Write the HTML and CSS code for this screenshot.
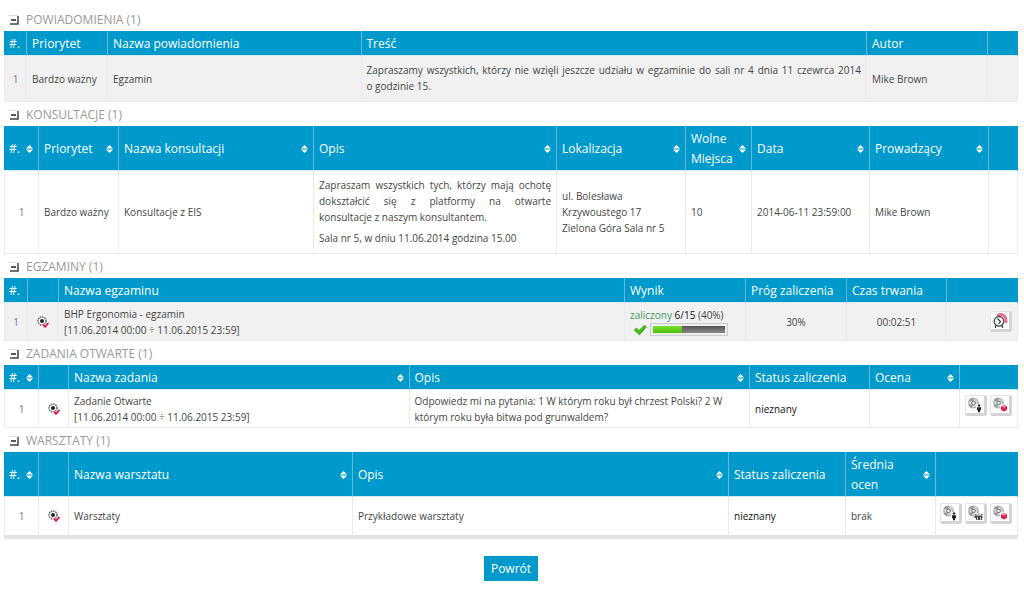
FILE: index.html
```html
<!DOCTYPE html>
<html lang="pl">
<head>
<meta charset="utf-8">
<title>Powiadomienia i zadania</title>
<link rel="stylesheet" href="styles.css">
</head>
<body>
<svg class="defs" aria-hidden="true">
  <symbol id="sort" viewBox="0 0 7 8"><path d="M3.5 0 7 3.5H0zM3.5 8 0 4.500H7z" fill="#fff"/></symbol>
  <symbol id="minus" viewBox="0 0 10 10"><path d="M0 .5h9" stroke="#ddd" fill="none"/><path d="M9 1v8H1" stroke="#444" stroke-width="1.500" fill="none"/><path d="M2 5h5" stroke="#222" stroke-width="1.500"/></symbol>
  <symbol id="gear" viewBox="0 0 12 12"><circle cx="5" cy="5" r="4" fill="#fff" stroke="#666" stroke-width="1.500" stroke-dasharray="1.600 .7"/><circle cx="5" cy="5" r="2" fill="#222"/><path d="M6 8.500 8 11l3.500-4" stroke="#fff" stroke-width="2.500" fill="none"/><path d="M6 8.500 8 10.800 11.500 7" stroke="#d8143c" stroke-width="1.800" fill="none"/></symbol>
  <g id="disc"><circle cx="6.500" cy="6" r="4.500" fill="#e8eaea" stroke="#bbb" stroke-width="2"/><path d="M1.500 3.500A5.500 5.500 0 0 1 6.500 .8L6.500 5zM1.500 8a5.500 5.500 0 0 0 3 3l2-4z" fill="#959a9a"/><path d="M8 1a5 5 0 0 1 3.500 4l-4 1z" fill="#c2cccc"/><circle cx="6.500" cy="6" r="1.800" fill="#fff" stroke="#666"/></g>
  <symbol id="person" viewBox="0 0 16 16"><use href="#disc"/><path d="M9.500 7H15v8H8.500z" fill="#fff"/><circle cx="12" cy="8.500" r="1.300" fill="#333"/><path d="M10 10.300h4v3h-1v2h-2v-2h-1z" fill="#222"/></symbol>
  <symbol id="group" viewBox="0 0 16 16"><use href="#disc"/><path d="M7.500 8H16v7.500H7.500z" fill="#fff"/><path d="M8 9h1.500v1H8zM11 8.500h1.500v1H11zM14 9h1.500v1H14z" fill="#444"/><path d="M7.500 10.500h8v2.500h-.5v2h-1.300v-3h-.7v3h-2v-3h-.7v3H9v-2H7.500z" fill="#444"/></symbol>
  <symbol id="box" viewBox="0 0 16 16"><use href="#disc"/><path d="M8 8.500 12 7l4 1.500V15H9z" fill="#fff"/><path d="m9 9.500 3-1.500 3 1v4l-3 1.500-3-1.500z" fill="#dc2448"/><path d="m9.500 9.500 2.500-1.200 2.500.9-2.200 1.300z" fill="#f7a5b5"/></symbol>
  <symbol id="clock" viewBox="0 0 16 16"><path d="M5 3C8-.5 15.500 2 13.800 10" stroke="#ea6c88" stroke-width="2.600" fill="none"/><circle cx="7" cy="8.300" r="4.800" fill="#fff" stroke="#444" stroke-width="1.300"/><path d="m5.500 5.500 3 3-2 2.500M3.500 12.500V15M10.500 12.500V15" stroke="#333" stroke-width="1.200" fill="none"/></symbol>
  <symbol id="tick" viewBox="0 0 14 12"><path d="m1 6 2.500-2L6 6.500 11.500 1 13.500 3 6.500 11z" fill="#43bd13" stroke="#2f9a0c" stroke-width=".5"/></symbol>
</svg>
<main>
  <section>
    <h2 class="title"><button class="toggle" aria-label="Zwiń powiadomienia"><svg><use href="#minus"/></svg></button>POWIADOMIENIA (1)</h2>
    <table class="grid shaded">
      <colgroup><col class="w23"><col class="w81"><col class="p25"><col><col class="w121"><col class="w30"></colgroup>
      <thead><tr><th>#.</th><th>Priorytet</th><th>Nazwa powiadomienia</th><th>Treść</th><th>Autor</th><th></th></tr></thead>
      <tbody><tr><td class="num">1</td><td>Bardzo ważny</td><td>Egzamin</td><td><p>Zapraszamy wszystkich, którzy nie wzięli jeszcze udziału w egzaminie do sali nr 4 dnia 11 czewrca 2014 o&nbsp;godzinie 15.</p></td><td>Mike Brown</td><td></td></tr></tbody>
    </table>
  </section>
  <section>
    <h2 class="title"><button class="toggle" aria-label="Zwiń konsultacje"><svg><use href="#minus"/></svg></button>KONSULTACJE (1)</h2>
    <table class="grid">
      <colgroup><col class="w35"><col class="w80"><col class="w195"><col><col class="w129"><col class="w66"><col class="w118"><col class="w119"><col class="w29"></colgroup>
      <thead><tr><th><button class="sort">#.<svg><use href="#sort"/></svg></button></th><th><button class="sort">Priorytet<svg><use href="#sort"/></svg></button></th><th><button class="sort">Nazwa konsultacji<svg><use href="#sort"/></svg></button></th><th><button class="sort">Opis<svg><use href="#sort"/></svg></button></th><th><button class="sort">Lokalizacja<svg><use href="#sort"/></svg></button></th><th><button class="sort">Wolne<br>Miejsca<svg><use href="#sort"/></svg></button></th><th><button class="sort">Data<svg><use href="#sort"/></svg></button></th><th><button class="sort">Prowadzący<svg><use href="#sort"/></svg></button></th><th></th></tr></thead>
      <tbody><tr><td class="num">1</td><td>Bardzo ważny</td><td>Konsultacje z EIS</td><td><p>Zapraszam wszystkich tych, którzy mają ochotę dokształcić się z platformy na otwarte konsultacje&nbsp;z naszym konsultantem.</p><p>Sala nr 5, w dniu 11.06.2014 godzina 15.00</p></td><td>ul. Bolesława<br>Krzywoustego 17<br>Zielona Góra Sala nr 5</td><td>10</td><td>2014-06-11 23:59:00</td><td>Mike Brown</td><td></td></tr></tbody>
    </table>
  </section>
  <section>
    <h2 class="title"><button class="toggle" aria-label="Zwiń egzaminy"><svg><use href="#minus"/></svg></button>EGZAMINY (1)</h2>
    <table class="grid shaded">
      <colgroup><col class="w24"><col class="w31"><col><col class="w121"><col class="w101"><col class="w100"><col class="w71"></colgroup>
      <thead><tr><th>#.</th><th></th><th>Nazwa egzaminu</th><th>Wynik</th><th>Próg zaliczenia</th><th>Czas trwania</th><th></th></tr></thead>
      <tbody><tr><td class="num">1</td><td class="mark"><svg><use href="#gear"/></svg></td><td>BHP Ergonomia - egzamin<br>[11.06.2014 00:00 ÷ 11.06.2015 23:59]</td><td><span class="passed">zaliczony</span> <span class="dark">6/15</span> (40%)<div class="result"><svg><use href="#tick"/></svg><div class="bar"><div class="track"><div class="fill" style="width:40%"></div></div></div></div></td><td class="center">30%</td><td class="center">00:02:51</td><td><div class="actions"><button aria-label="Historia czasu"><svg><use href="#clock"/></svg></button></div></td></tr></tbody>
    </table>
  </section>
  <section>
    <h2 class="title"><button class="toggle" aria-label="Zwiń zadania otwarte"><svg><use href="#minus"/></svg></button>ZADANIA OTWARTE (1)</h2>
    <table class="grid">
      <colgroup><col class="w35"><col class="w30"><col><col><col class="w120"><col class="w90"><col class="w58"></colgroup>
      <thead><tr><th><button class="sort">#.<svg><use href="#sort"/></svg></button></th><th></th><th><button class="sort">Nazwa zadania<svg><use href="#sort"/></svg></button></th><th><button class="sort">Opis<svg><use href="#sort"/></svg></button></th><th>Status zaliczenia</th><th><button class="sort">Ocena<svg><use href="#sort"/></svg></button></th><th></th></tr></thead>
      <tbody><tr><td class="num">1</td><td class="mark"><svg><use href="#gear"/></svg></td><td>Zadanie Otwarte<br>[11.06.2014 00:00 ÷ 11.06.2015 23:59]</td><td class="brief">Odpowiedz mi na pytania: 1 W którym roku był chrzest Polski? 2 W którym roku była bitwa pod grunwaldem?</td><td class="dark">nieznany</td><td></td><td><div class="actions raised"><button aria-label="Moje prace"><svg><use href="#person"/></svg></button><button aria-label="Pakiet"><svg><use href="#box"/></svg></button></div></td></tr></tbody>
    </table>
  </section>
  <section>
    <h2 class="title"><button class="toggle" aria-label="Zwiń warsztaty"><svg><use href="#minus"/></svg></button>WARSZTATY (1)</h2>
    <table class="grid last">
      <colgroup><col class="w35"><col class="w30"><col class="p28"><col><col class="w117"><col class="w90"><col class="w82"></colgroup>
      <thead><tr><th><button class="sort">#.<svg><use href="#sort"/></svg></button></th><th></th><th><button class="sort">Nazwa warsztatu<svg><use href="#sort"/></svg></button></th><th><button class="sort">Opis<svg><use href="#sort"/></svg></button></th><th>Status zaliczenia</th><th><button class="sort">Średnia<br>ocen<svg><use href="#sort"/></svg></button></th><th></th></tr></thead>
      <tbody><tr><td class="num">1</td><td class="mark"><svg><use href="#gear"/></svg></td><td>Warsztaty</td><td>Przykładowe warsztaty</td><td class="dark">nieznany</td><td>brak</td><td><div class="actions raised"><button aria-label="Moje prace"><svg><use href="#person"/></svg></button><button aria-label="Prace grupy"><svg><use href="#group"/></svg></button><button aria-label="Pakiet"><svg><use href="#box"/></svg></button></div></td></tr></tbody>
    </table>
  </section>
  <div class="footer"><button class="back">Powrót</button></div>
</main>
</body>
</html>
```
FILE: styles.css
```css
* { box-sizing: border-box; }
body {
  margin: 0;
  padding: 7px 6px 12px 4px;
  background: #fff;
  color: #444;
  font: 10px/16px "Open Sans", "Noto Sans", sans-serif;
}
button {
  margin: 0;
  padding: 0;
  border: 0;
  background: none;
  color: inherit;
  font: inherit;
  cursor: pointer;
}
svg { display: block; }
.defs { position: absolute; width: 0; height: 0; }

.title {
  display: flex;
  align-items: center;
  gap: 7px;
  height: 24px;
  margin: 0;
  padding: 1px 0 0 5px;
  color: #999;
  font-size: 12px;
  font-weight: 400;
}
.toggle svg { width: 10px; height: 10px; }

.grid {
  width: 100%;
  table-layout: fixed;
  border-collapse: separate;
  border-spacing: 0;
}
.grid th {
  padding: 3px 5px 1px;
  border-right: 1px solid #6fb6d2;
  border-bottom: 1px solid #d9ecf3;
  background: #09c;
  color: #fff;
  font-size: 12px;
  font-weight: 500;
  line-height: 20px;
  text-align: left;
  white-space: nowrap;
}
.grid th:last-child { border-right-color: #09c; }
.grid td {
  height: 38px;
  padding: 2px 5px;
  border-right: 1px solid #ebebeb;
  border-bottom: 1px solid #ebebeb;
}
.grid td:first-child { border-left: 1px solid #ebebeb; }
.shaded td { background: #f1f1f1; }
.last td { border-bottom: 4px solid #e3e3e3; height: 42px; }
.grid p { margin: 4px 0 5px; text-align: justify; }
.grid .num, .grid .center { text-align: center; }
.grid .num { padding: 2px 0; color: #777; }
.grid .dark, .dark { color: #111; }
.passed { color: #3c9a5f; }
.mark svg { width: 12px; height: 12px; margin: 0 auto; }

.sort {
  display: grid;
  grid-template-columns: 1fr 7px;
  align-items: center;
  width: 100%;
  text-align: left;
}
.sort svg { width: 7px; height: 8px; grid-column: 2; }

.result { display: flex; align-items: center; gap: 3px; padding-left: 3px; height: 14px; }
.result svg { width: 14px; height: 12px; }
.bar {
  width: 78px;
  padding: 2px;
  border: 1px solid #ccc;
  background: #eee;
}
.track { height: 7px; background: linear-gradient(#555, #888); }
.fill { height: 100%; background: linear-gradient(#7be02b, #48bf08); }

.brief { padding-right: 20px; }

.actions { display: flex; justify-content: flex-end; gap: 3px; }
.raised { padding-bottom: 6px; }
.actions button {
  width: 22px;
  height: 21px;
  padding: 1px;
  border: 1px solid #e2e2e2;
  border-right: 3px solid #d4d4d4;
  border-bottom: 3px solid #d4d4d4;
  border-radius: 3px;
  background: #fff;
}
.actions svg { width: 16px; height: 16px; }

.footer { display: flex; justify-content: center; padding-top: 17px; }
.back {
  padding: 2px 7px;
  background: #09c;
  color: #fff;
  font-size: 12px;
  line-height: 21px;
}

.w23 { width: 23px; }
.w24 { width: 24px; }
.w29 { width: 29px; }
.w30 { width: 30px; }
.w31 { width: 31px; }
.w35 { width: 35px; }
.w58 { width: 58px; }
.w66 { width: 66px; }
.w71 { width: 71px; }
.w80 { width: 80px; }
.w81 { width: 81px; }
.w82 { width: 82px; }
.w90 { width: 90px; }
.w100 { width: 100px; }
.w101 { width: 101px; }
.w117 { width: 117px; }
.w118 { width: 118px; }
.w119 { width: 119px; }
.w120 { width: 120px; }
.w121 { width: 121px; }
.w129 { width: 129px; }
.w195 { width: 195px; }
.p25 { width: 25%; }
.p28 { width: 28%; }
```
